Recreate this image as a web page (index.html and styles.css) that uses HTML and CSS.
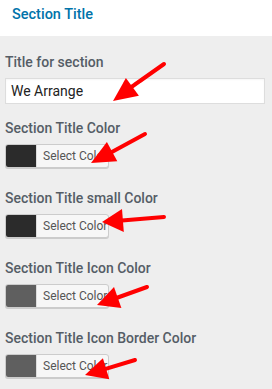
FILE: index.html
```html
<!DOCTYPE html>
<html><head>
<meta charset="utf-8">
<title>Section Title</title>
<link rel="stylesheet" href="styles.css">
</head><body>
<div class="head">Section Title</div>
<div class="panel">
	<div class="field first">
		<label class="lbl">Title for section</label>
		<input class="txt" type="text" value="We Arrange">
	</div>
	<div class="field">
		<label class="lbl">Section Title Color</label>
		<div class="picker"><span class="swatch dark"></span><span class="pick">Select Color</span></div>
	</div>
	<div class="field">
		<label class="lbl">Section Title small Color</label>
		<div class="picker"><span class="swatch dark"></span><span class="pick">Select Color</span></div>
	</div>
	<div class="field">
		<label class="lbl">Section Title Icon Color</label>
		<div class="picker"><span class="swatch grey"></span><span class="pick">Select Color</span></div>
	</div>
	<div class="field">
		<label class="lbl">Section Title Icon Border Color</label>
		<div class="picker"><span class="swatch grey"></span><span class="pick">Select Color</span></div>
	</div>
</div>
<!-- annotation arrows drawn over the screenshot -->
<svg class="marks" width="272" height="389" viewBox="0 0 272 389">
	<g stroke="#f00" stroke-width="4" stroke-linecap="round" fill="#f00">
		<line x1="164" y1="64" x2="130" y2="88"/>
		<polygon points="113,101 138.9,95.8 125.9,78" stroke="none"/>
		<line x1="145" y1="134" x2="110" y2="153"/>
		<polygon points="91,163 117.3,161.3 106.9,141.9" stroke="none"/>
		<line x1="164" y1="217" x2="122" y2="220.5"/>
		<polygon points="102,222 123.8,232 122,209" stroke="none"/>
		<line x1="147" y1="287" x2="115" y2="298.5"/>
		<polygon points="97,305 121.4,307.9 114,287.1" stroke="none"/>
		<line x1="135" y1="360" x2="104" y2="369.3"/>
		<polygon points="85,375 109.3,379.2 102.9,358.2" stroke="none"/>
	</g>
</svg>
</body></html>
```
FILE: styles.css
```css
body {
margin:0;
background-color:#eeeeee;
font-family:Roboto,"Liberation Sans",Arial,sans-serif;
position:relative;
height:389px;
overflow:hidden;
}
.head {
background-color:#ffffff;
height:36px;
line-height:30px;
padding-left:12px;
color:#0073aa;
font-size:14.5px;
font-weight:500;
}
.panel {
padding:16px 7px 0px 5px;
}
.field {
margin-bottom:20px;
}
.field.first {
margin-bottom:14px;
}
.lbl {
display:block;
font-size:14px;
line-height:20px;
font-weight:500;
color:#555d66;
margin-bottom:6px;
}
.txt {
display:block;
box-sizing:border-box;
width:260px;
height:26px;
margin:0;
padding:0px 5px;
border:1px solid #dddddd;
background-color:#ffffff;
font-family:Roboto,"Liberation Sans",Arial,sans-serif;
font-size:14px;
color:#222222;
box-shadow:inset 0 1px 2px rgba(0,0,0,0.04);
}
.picker {
display:flex;
box-sizing:border-box;
width:104px;
height:24px;
border:1px solid #cccccc;
border-radius:3px;
background-color:#f7f7f7;
box-shadow:0 1px 0 #cccccc;
overflow:hidden;
}
.swatch {
width:30px;
height:100%;
}
.swatch.dark {
background-color:#2b2b2b;
}
.swatch.grey {
background-color:#5f5f5f;
}
.pick {
flex:1;
border-left:1px solid #dddddd;
padding-left:6px;
font-size:12px;
line-height:22px;
color:#555555;
white-space:nowrap;
}
.marks {
position:absolute;
left:0;
top:0;
}
```
